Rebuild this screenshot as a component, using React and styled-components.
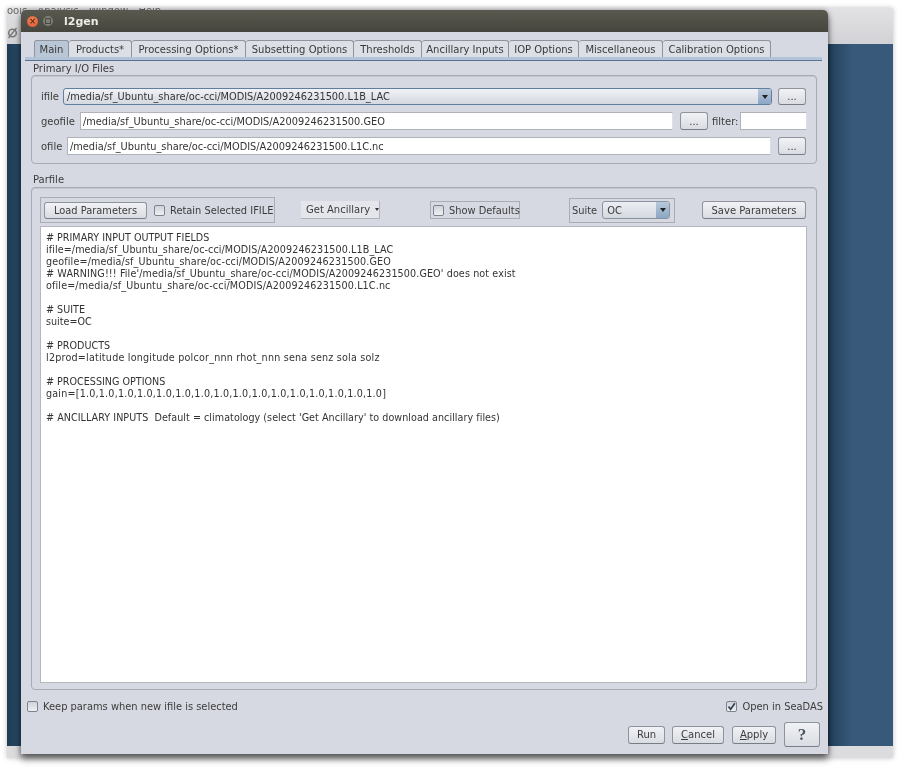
import React from "react";
import styled, { createGlobalStyle } from "styled-components";

const GlobalStyle = createGlobalStyle`
  html, body {
    margin: 0;
    padding: 0;
    background: #ffffff;
  }
  * {
    box-sizing: border-box;
  }
`;

const Desktop = styled.div`
  position: relative;
  width: 900px;
  height: 768px;
  overflow: hidden;
  background: #fff;
  font-family: "DejaVu Sans", sans-serif;
  font-size: 10px;
  color: #3c3c3c;
  filter: blur(0.3px);
`;

const BackWindow = styled.div`
  position: absolute;
  left: 7px;
  top: 8px;
  width: 886px;
  height: 750px;
  display: flex;
  flex-direction: column;
  background: #dcdcdf;
  box-shadow: 0 0 5px rgba(0, 0, 0, 0.25);
`;

const BackMenu = styled.div`
  height: 36px;
  flex: none;
  overflow: hidden;
  line-height: 6px;
  font-size: 10px;
  word-spacing: 7px;
  color: #666;
  white-space: nowrap;
  background: linear-gradient(#e2e2e4, #d2d2d6);
`;

const BackBody = styled.div`
  height: 702px;
  flex: none;
  background: linear-gradient(90deg, #1f3c55 0, #2a4a68 14px, #22405a 821px, #38597a 845px);
`;

const NoIcon = styled.svg`
  position: absolute;
  left: 0;
  top: 19px;
`;

const Dialog = styled.div`
  position: absolute;
  left: 21px;
  top: 10px;
  width: 807px;
  height: 744px;
  display: flex;
  flex-direction: column;
  background: #d6d9e1;
  border-radius: 5px 5px 0 0;
  box-shadow: 0 5px 7px rgba(0, 0, 0, 0.55), 0 0 4px rgba(0, 0, 0, 0.3);
`;

const TitleBar = styled.div`
  height: 22px;
  flex: none;
  display: flex;
  align-items: center;
  padding-left: 6px;
  background: linear-gradient(#5a5950, #47463e);
  border-radius: 5px 5px 0 0;
`;

const CloseDot = styled.div`
  width: 11px;
  height: 11px;
  border-radius: 50%;
  background: radial-gradient(circle at 50% 40%, #f08a5e, #d9502a);
  color: #5a2010;
  font-size: 8px;
  font-weight: bold;
  line-height: 11px;
  text-align: center;
`;

const MaxDot = styled.div`
  width: 10px;
  height: 10px;
  margin-left: 5px;
  border-radius: 50%;
  background: #7f7e76;
  display: flex;
  align-items: center;
  justify-content: center;
  &::after {
    content: "";
    width: 4px;
    height: 4px;
    border: 1px solid #4b4a42;
  }
`;

const Title = styled.div`
  margin-left: 11px;
  color: #ecebe6;
  font-size: 11px;
  font-weight: bold;
`;

const TabStrip = styled.div`
  margin: 8px 6px 0 4px;
  height: 20px;
  flex: none;
  display: flex;
  padding-left: 9px;
  border-bottom: 3px solid #b4c4d8;
  box-shadow: 0 1px 0 #5b7290;
`;

const Tab = styled.div`
  width: ${(p) => p.$w}px;
  height: 17px;
  display: flex;
  align-items: center;
  justify-content: center;
  border: 1px solid #8f949c;
  border-bottom: none;
  border-left: ${(p) => (p.$first ? "1px solid #8f949c" : "none")};
  border-radius: 3px 3px 0 0;
  background: ${(p) => (p.$active ? "#b9c6d6" : "#dcdfe6")};
  color: #3a3a3a;
  font-size: 10px;
  white-space: nowrap;
`;

const SectionLabel = styled.div`
  margin-left: 12px;
  height: 12px;
  line-height: 12px;
  margin-top: ${(p) => p.$top}px;
  flex: none;
`;

const Panel = styled.div`
  margin: 0 0 0 10px;
  width: 786px;
  flex: none;
  border: 1px solid #a7abb3;
  border-radius: 4px;
  box-shadow: inset 0 1px 0 #c3c6ce;
`;

const IoPanel = styled(Panel)`
  margin-top: 0;
  height: 89px;
  padding: 12px 10px 0 9px;
  display: flex;
  flex-direction: column;
  gap: 7px;
`;

const IoRow = styled.div`
  display: flex;
  align-items: center;
  height: ${(p) => p.$h}px;
`;

const RowLabel = styled.span`
  width: ${(p) => p.$w}px;
  flex: none;
`;

const TextField = styled.div`
  flex: ${(p) => (p.$w ? "none" : "1")};
  width: ${(p) => (p.$w ? `${p.$w}px` : "auto")};
  height: 18px;
  line-height: 17px;
  padding-left: 2px;
  background: #fff;
  border: 1px solid #b0b3ba;
  border-right-color: #dde;
  color: #333;
  font-size: 9.8px;
  white-space: nowrap;
`;

const Combo = styled.div`
  flex: 1;
  height: 17px;
  display: flex;
  align-items: center;
  justify-content: space-between;
  padding-left: 3px;
  border: 1px solid #5f7ea0;
  border-radius: 3px;
  background: linear-gradient(#f0f2f6, #d4d8e0);
  color: #333;
  font-size: 9.8px;
`;

const ComboArrow = styled.div`
  width: 13px;
  height: 100%;
  display: flex;
  align-items: center;
  justify-content: center;
  background: linear-gradient(#b9c9dc, #8ba6c4);
  border-radius: 0 2px 2px 0;
  &::after {
    content: "";
    border-left: 3px solid transparent;
    border-right: 3px solid transparent;
    border-top: 4px solid #222;
  }
`;

const Button = styled.div`
  flex: none;
  width: ${(p) => p.$w}px;
  height: ${(p) => p.$h || 18}px;
  margin-left: ${(p) => p.$ml || 0}px;
  display: flex;
  align-items: center;
  justify-content: center;
  border: 1px solid #8f949c;
  border-bottom-color: #777c85;
  border-radius: 3px;
  background: linear-gradient(#f1f2f5, #d9dce2);
  color: #3c3c3c;
  white-space: nowrap;
`;

const Underline = styled.span`
  text-decoration: underline;
`;

const FilterLabel = styled.span`
  margin: 0 2px 0 4px;
  width: 26px;
  flex: none;
`;

const ParPanel = styled(Panel)`
  margin-top: 1px;
  height: 503px;
  padding: 9px 9px 6px 8px;
  display: flex;
  flex-direction: column;
`;

const Toolbar = styled.div`
  height: 26px;
  display: flex;
  align-items: center;
  flex: none;
`;

const GroupBox = styled.div`
  flex: none;
  width: ${(p) => p.$w}px;
  height: ${(p) => p.$h}px;
  margin-left: ${(p) => p.$ml || 0}px;
  display: flex;
  align-items: center;
  padding-left: ${(p) => p.$pl || 0}px;
  border: 1px solid #a9adb5;
  font-size: 9.85px;
  white-space: nowrap;
`;

const CheckBox = styled.div`
  flex: none;
  width: 11px;
  height: 11px;
  margin: 0 5px 0 ${(p) => p.$ml || 0}px;
  border: 1px solid #7f848c;
  border-radius: 2px;
  background: linear-gradient(#cfd2d9, #eef0f3);
  display: flex;
  align-items: center;
  justify-content: center;
`;

const MenuButton = styled.div`
  flex: none;
  width: 79px;
  height: 18px;
  margin-left: 26px;
  display: flex;
  align-items: center;
  padding-left: 5px;
  gap: 5px;
  background: #e4e6eb;
  border-right: 1px solid #b0b3ba;
  border-bottom: 1px solid #b0b3ba;
  white-space: nowrap;
  &::after {
    content: "";
    border-left: 2px solid transparent;
    border-right: 2px solid transparent;
    border-top: 3px solid #333;
  }
`;

const SuiteCombo = styled.div`
  flex: none;
  width: 68px;
  height: 18px;
  margin-left: 5px;
  display: flex;
  align-items: center;
  justify-content: space-between;
  padding-left: 4px;
  border: 1px solid #8a93a0;
  border-radius: 3px;
  background: linear-gradient(#eceef2, #d4d8e0);
`;

const ParText = styled.div`
  flex: 1;
  margin: 3px 0 0 0;
  padding: 5px 0 0 5px;
  background: #fff;
  border: 1px solid #b4b7be;
  font-size: 9.6px;
  line-height: 12px;
  color: #333;
`;

const ParLine = styled.div`
  height: 12px;
  white-space: pre;
  letter-spacing: ${(p) => p.$ls || 0}px;
`;

const OptionRow = styled.div`
  margin-top: 9px;
  height: 14px;
  display: flex;
  align-items: center;
  justify-content: space-between;
  padding: 0 5px 0 6px;
  flex: none;
`;

const CheckLabel = styled.div`
  display: flex;
  align-items: center;
  font-size: 9.9px;
`;

const ActionRow = styled.div`
  margin-top: 9px;
  display: flex;
  align-items: center;
  justify-content: flex-end;
  padding-right: 8px;
  flex: none;
`;

const HelpButton = styled(Button)`
  font-size: 17px;
  font-weight: bold;
  color: #4b5568;
  font-family: "Liberation Serif", serif;
`;

const tabs = [
  ["Main", 35],
  ["Products*", 63],
  ["Processing Options*", 114],
  ["Subsetting Options", 108],
  ["Thresholds", 68],
  ["Ancillary Inputs", 87],
  ["IOP Options", 70],
  ["Miscellaneous", 84],
  ["Calibration Options", 108],
];

const parLines = [
  ["# PRIMARY INPUT OUTPUT FIELDS", 0],
  ["ifile=/media/sf_Ubuntu_share/oc-cci/MODIS/A2009246231500.L1B_LAC", 0.09],
  ["geofile=/media/sf_Ubuntu_share/oc-cci/MODIS/A2009246231500.GEO", 0.14],
  ["# WARNING!!! File'/media/sf_Ubuntu_share/oc-cci/MODIS/A2009246231500.GEO' does not exist", 0.11],
  ["ofile=/media/sf_Ubuntu_share/oc-cci/MODIS/A2009246231500.L1C.nc", 0.14],
  ["", 0],
  ["# SUITE", 0],
  ["suite=OC", 0],
  ["", 0],
  ["# PRODUCTS", 0],
  ["l2prod=latitude longitude polcor_nnn rhot_nnn sena senz sola solz", 0.21],
  ["", 0],
  ["# PROCESSING OPTIONS", 0],
  ["gain=[1.0,1.0,1.0,1.0,1.0,1.0,1.0,1.0,1.0,1.0,1.0,1.0,1.0,1.0,1.0,1.0]", 0.2],
  ["", 0],
  ["# ANCILLARY INPUTS  Default = climatology (select 'Get Ancillary' to download ancillary files)", 0.04],
];

const App = () => {
  return (
    <Desktop>
      <GlobalStyle />
      <BackWindow>
        <BackMenu>ools Analysis Window Help</BackMenu>
        <BackBody />
        <NoIcon width="11" height="12" viewBox="0 0 11 12">
          <circle cx="5.5" cy="6" r="3.8" fill="none" stroke="#777" strokeWidth="1.5" />
          <path d="M1.5 11 9.5 1" stroke="#777" strokeWidth="1.3" />
        </NoIcon>
      </BackWindow>
      <Dialog>
        <TitleBar>
          <CloseDot>×</CloseDot>
          <MaxDot />
          <Title>l2gen</Title>
        </TitleBar>
        <TabStrip>
          {tabs.map(([name, w], i) => (
            <Tab key={name} $w={w} $active={i === 0} $first={i === 0}>
              {name}
            </Tab>
          ))}
        </TabStrip>
        <SectionLabel $top={3}>Primary I/O Files</SectionLabel>
        <IoPanel>
          <IoRow $h={17}>
            <RowLabel $w={22}>ifile</RowLabel>
            <Combo>
              /media/sf_Ubuntu_share/oc-cci/MODIS/A2009246231500.L1B_LAC
              <ComboArrow />
            </Combo>
            <Button $w={28} $h={17} $ml={6}>...</Button>
          </IoRow>
          <IoRow $h={18}>
            <RowLabel $w={39}>geofile</RowLabel>
            <TextField $w={593}>/media/sf_Ubuntu_share/oc-cci/MODIS/A2009246231500.GEO</TextField>
            <Button $w={28} $ml={7}>...</Button>
            <FilterLabel>filter:</FilterLabel>
            <TextField $w={67} />
          </IoRow>
          <IoRow $h={18}>
            <RowLabel $w={26}>ofile</RowLabel>
            <TextField>/media/sf_Ubuntu_share/oc-cci/MODIS/A2009246231500.L1C.nc</TextField>
            <Button $w={28} $ml={7}>...</Button>
          </IoRow>
        </IoPanel>
        <SectionLabel $top={10}>Parfile</SectionLabel>
        <ParPanel>
          <Toolbar>
            <GroupBox $w={235} $h={26} $pl={3}>
              <Button $w={103} $h={17}>Load Parameters</Button>
              <CheckBox $ml={7} />
              Retain Selected IFILE
            </GroupBox>
            <MenuButton>Get Ancillary</MenuButton>
            <GroupBox $w={90} $h={18} $ml={50} $pl={1}>
              <CheckBox $ml={1} />
              Show Defaults
            </GroupBox>
            <GroupBox $w={106} $h={25} $ml={49} $pl={2}>
              Suite
              <SuiteCombo>
                OC
                <ComboArrow />
              </SuiteCombo>
            </GroupBox>
            <Button $w={104} $ml={27}>Save Parameters</Button>
          </Toolbar>
          <ParText>
            {parLines.map(([text, ls], i) => (
              <ParLine key={i} $ls={ls}>{text}</ParLine>
            ))}
          </ParText>
        </ParPanel>
        <OptionRow>
          <CheckLabel>
            <CheckBox />
            Keep params when new ifile is selected
          </CheckLabel>
          <CheckLabel>
            <CheckBox>
              <svg width="9" height="9" viewBox="0 0 9 9">
                <path d="M1.5 4.5 3.6 7.3 7.8 1.2" fill="none" stroke="#2c3e55" strokeWidth="1.6" />
              </svg>
            </CheckBox>
            Open in SeaDAS
          </CheckLabel>
        </OptionRow>
        <ActionRow>
          <Button $w={37}>Run</Button>
          <Button $w={52} $ml={7}><span><Underline>C</Underline>ancel</span></Button>
          <Button $w={44} $ml={8}><span><Underline>A</Underline>pply</span></Button>
          <HelpButton $w={36} $h={25} $ml={8}>?</HelpButton>
        </ActionRow>
      </Dialog>
    </Desktop>
  );
};

export default App;
